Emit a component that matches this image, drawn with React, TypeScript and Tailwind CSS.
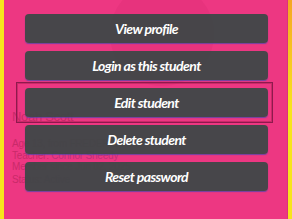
import React from 'react';

const actions = ['View profile', 'Login as this student', 'Edit student', 'Delete student', 'Reset password'];

export default function App() {
  return (
    <div className="relative w-[292px] h-[219px] overflow-hidden flex bg-[#ed3782]">
      <div className="w-[4px] bg-[#f7e51c]" />
      <div className="relative flex-1 bg-[#ed3782] overflow-hidden">
        <div className="absolute left-[106px] top-[-18px] w-[104px] h-[104px] rounded-full bg-[#e3317a] opacity-60" />
        <div className="relative pt-[109px] pl-[8px] font-['Liberation_Sans',sans-serif] text-[#c92a69]">
          <div className="text-[13px] leading-[16px] tracking-[-0.3px]">Noah Scott</div>
          <div className="mt-[13px] text-[10px] leading-[11.5px] tracking-[-0.2px]">
            <div>Age 13, from FREDERICTON</div>
            <div>Teacher: <span className="text-[#c0307a]">Connor Sheedy</span></div>
            <div>Member since Jun 02, 2025</div>
            <div className="mt-[1px]">Status: <span className="text-[#c0307a]">Active</span></div>
          </div>
        </div>
      </div>
      <div className="w-[1px] bg-[#d9357a]" />
      <div className="w-[4px] bg-gradient-to-b from-[#f5a623] via-[#f7e51c] to-[#f7e51c]" />

      <div className="absolute inset-0 flex flex-col gap-[8px] pt-[14px] pl-[25px] pr-[24px] font-['Lato',sans-serif]">
        {actions.map((label, i) => (
          <div key={label} className="relative">
            {i === 2 && (
              <div className="absolute -left-[9px] -right-[5px] -top-[6px] -bottom-[6px] border border-[#8e1a4d] shadow-[inset_0_0_0_1px_rgba(180,30,90,0.6)]" />
            )}
            <button className="relative w-full h-[29px] rounded-[4px] bg-[#3e4747]/[0.95] text-white text-[14px] font-bold italic tracking-[-0.6px] shadow-[0_1px_1px_rgba(80,70,170,0.8)]">
              {label}
            </button>
          </div>
        ))}
      </div>
    </div>
  );
}
